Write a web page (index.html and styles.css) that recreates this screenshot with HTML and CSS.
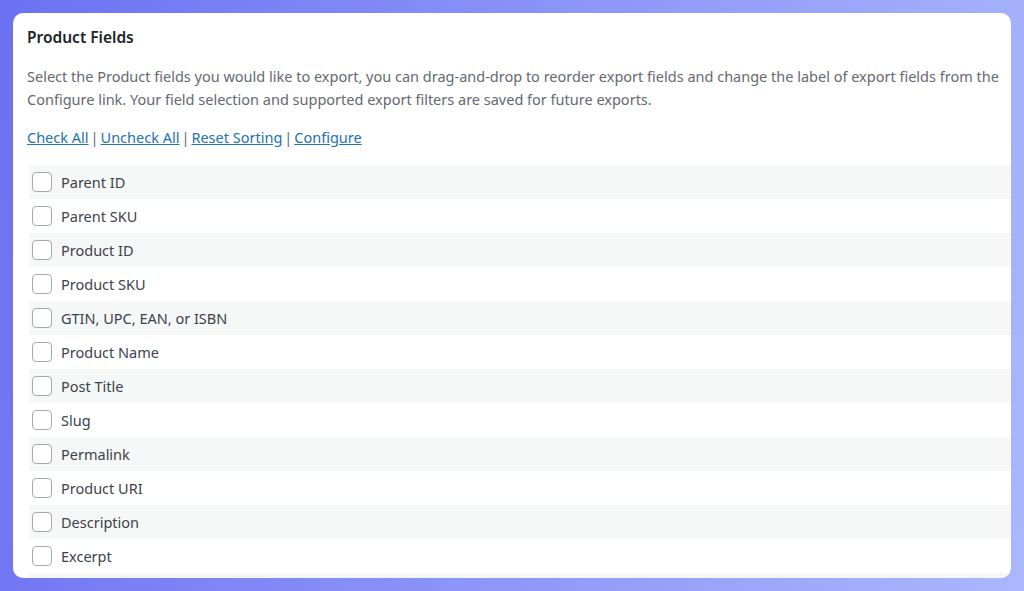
FILE: index.html
```html
<!DOCTYPE html>
<html lang="en">
<head>
    <meta charset="UTF-8">
    <meta name="viewport" content="width=device-width, initial-scale=1.0">
    <title>Product Fields</title>
    <link rel="stylesheet" href="styles.css">
</head>
<body>
    <div class="card">
        <h2 class="title">Product Fields</h2>
        <p class="intro">
            Select the Product fields you would like to export, you can drag-and-drop to reorder export fields and change the label of export fields from the<br>
            Configure link. Your field selection and supported export filters are saved for future exports.
        </p>
        <p class="actions">
            <a href="#">Check All</a><span class="sep">|</span><a href="#">Uncheck All</a><span class="sep">|</span><a href="#">Reset Sorting</a><span class="sep">|</span><a href="#">Configure</a>
        </p>
        <ul class="fields">
            <li><span class="box"></span>Parent ID</li>
            <li><span class="box"></span>Parent SKU</li>
            <li><span class="box"></span>Product ID</li>
            <li><span class="box"></span>Product SKU</li>
            <li><span class="box"></span>GTIN, UPC, EAN, or ISBN</li>
            <li><span class="box"></span>Product Name</li>
            <li><span class="box"></span>Post Title</li>
            <li><span class="box"></span>Slug</li>
            <li><span class="box"></span>Permalink</li>
            <li><span class="box"></span>Product URI</li>
            <li><span class="box"></span>Description</li>
            <li><span class="box"></span>Excerpt</li>
            <li></li>
        </ul>
    </div>
</body>
</html>
```

FILE: styles.css
```css
html, body {
    height: 100%;
}

body {
    margin: 0;
    padding: 13px;
    box-sizing: border-box;
    background: linear-gradient(100deg, #6c71f2 0%, #8f98f8 55%, #aab7fd 100%);
    font-family: "Noto Sans", "Open Sans", sans-serif;
    overflow: hidden;
}

.card {
    width: 998px;
    height: 565px;
    background: #fff;
    border-radius: 10px;
    padding: 13px 0 0 14px;
    box-sizing: border-box;
    overflow: hidden;
}

.title {
    margin: 0;
    font-size: 15.5px;
    line-height: 22px;
    font-weight: 600;
    color: #1d2327;
}

.intro {
    margin: 17px 0 0;
    padding-right: 8px;
    font-size: 14.5px;
    line-height: 23px;
    color: #646970;
    white-space: nowrap;
}

.actions {
    margin: 15px 0 0;
    font-size: 14.5px;
    line-height: 23px;
    color: #646970;
}

.actions a {
    color: #2271b1;
    text-decoration: underline;
}

.sep {
    margin: 0 2px;
}

.fields {
    list-style: none;
    margin: 16px 0 0 2px;
    padding: 0;
}

.fields li {
    display: flex;
    align-items: center;
    height: 34px;
    padding-left: 3px;
    font-size: 14.5px;
    color: #3c434a;
}

.fields li:nth-child(odd) {
    background: #f6f7f7;
}

.box {
    width: 18px;
    height: 18px;
    border: 1px solid #a7aaad;
    border-radius: 4px;
    background: #fff;
    margin-right: 9px;
    flex-shrink: 0;
}
```
